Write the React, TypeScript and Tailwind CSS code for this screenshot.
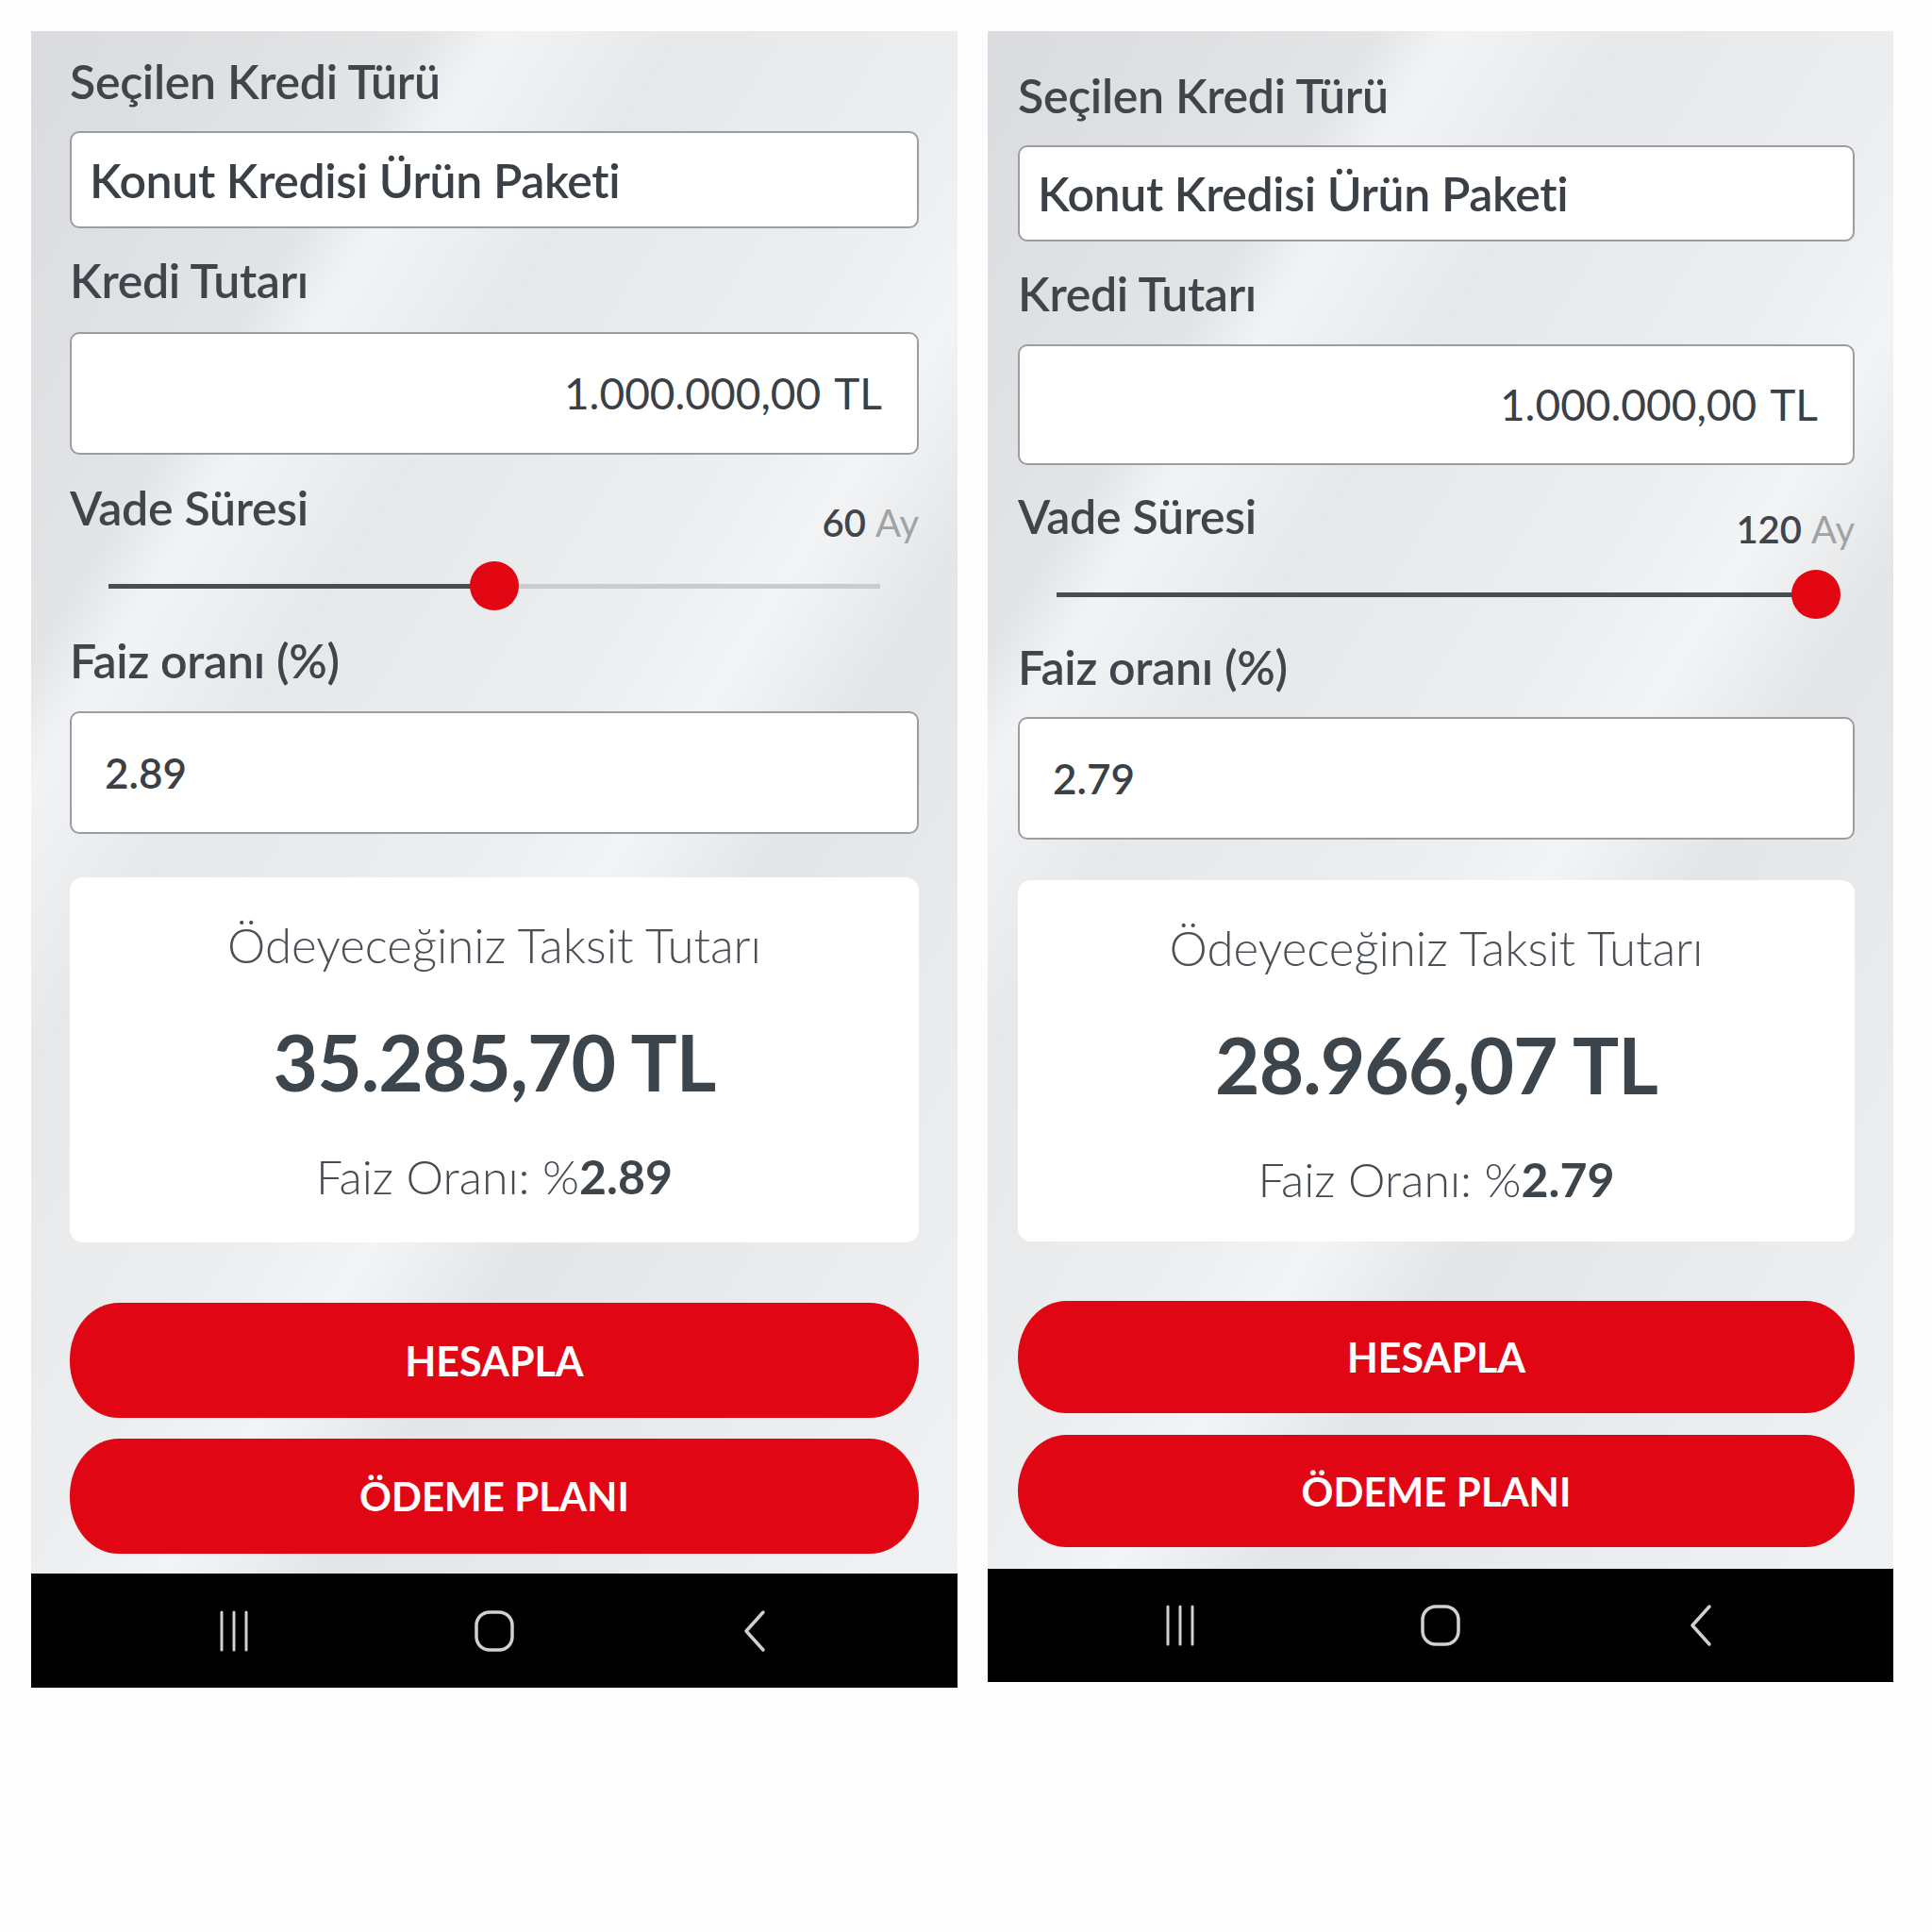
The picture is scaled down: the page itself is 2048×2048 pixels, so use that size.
import React from "react";

type Layout = {
  panel: string;
  content: string;
  input1: string;
  label2: string;
  input2: string;
  row3: string;
  months: string;
  slider: string;
  label4: string;
  input3: string;
  card: string;
  btn1: string;
  btn2: string;
  nav: string;
};

type Calc = {
  months: number;
  rate: string;
  payment: string;
  layout: Layout;
};

const FONT = "font-['Lato','Noto_Sans',sans-serif]";

const leftLayout: Layout = {
  panel: "w-[982px]",
  content: "pl-[41px] pr-[41px] pt-[28px]",
  input1: "mt-[28px] h-[103px]",
  label2: "mt-[30px]",
  input2: "mt-[30px] h-[130px]",
  row3: "mt-[31px]",
  months: "mt-[21px]",
  slider: "mt-[21px]",
  label4: "mt-[28px]",
  input3: "mt-[29px] h-[130px]",
  card: "mt-[46px] h-[387px]",
  btn1: "mt-[64px] h-[122px]",
  btn2: "mt-[22px] h-[122px]",
  nav: "mt-[21px] h-[121px]",
};

const rightLayout: Layout = {
  panel: "w-[960px]",
  content: "pl-[32px] pr-[41px] pt-[43px]",
  input1: "mt-[28px] h-[102px]",
  label2: "mt-[30px]",
  input2: "mt-[29px] h-[128px]",
  row3: "mt-[29px]",
  months: "mt-[19px]",
  slider: "mt-[23px]",
  label4: "mt-[26px]",
  input3: "mt-[28px] h-[130px]",
  card: "mt-[43px] h-[383px]",
  btn1: "mt-[63px] h-[119px]",
  btn2: "mt-[23px] h-[119px]",
  nav: "mt-[23px] h-[120px]",
};

const calcs: Calc[] = [
  { months: 60, rate: "2.89", payment: "35.285,70 TL", layout: leftLayout },
  { months: 120, rate: "2.79", payment: "28.966,07 TL", layout: rightLayout },
];

function Label({ children, className = "" }: { children: React.ReactNode; className?: string }) {
  return (
    <div className={`text-[50px] leading-none font-semibold tracking-[-0.3px] text-[#3f454b] ${className}`}>
      {children}
    </div>
  );
}

function Slider({ months, className }: { months: number; className: string }) {
  const pct = (months / 120) * 100;
  return (
    <div className={`relative mx-[41px] h-[52px] ${className}`}>
      <div className="absolute inset-x-0 top-[24px] flex h-[5px]">
        <div className="h-full bg-[#474d53]" style={{ width: `${pct}%` }} />
        <div className="h-full flex-1 bg-[#c9cbcd]" />
      </div>
      <div
        className="absolute top-0 h-[52px] w-[52px] -translate-x-1/2 rounded-full bg-[#e20613]"
        style={{ left: `${pct}%` }}
      />
    </div>
  );
}

function NavBar({ className }: { className: string }) {
  return (
    <div className={`flex items-center justify-center gap-[216px] bg-black ${className}`}>
      <div className="flex w-[60px] justify-center">
        <svg width="34" height="46" viewBox="0 0 34 46" fill="none" stroke="#cfd0d1" strokeWidth="3" strokeLinecap="round">
          <path d="M4 3v40M17 3v40M30 3v40" />
        </svg>
      </div>
      <div className="flex w-[60px] justify-center">
        <svg width="44" height="46" viewBox="0 0 44 46" fill="none" stroke="#cfd0d1" strokeWidth="3.5">
          <rect x="3" y="3" width="38" height="40" rx="14" />
        </svg>
      </div>
      <div className="flex w-[60px] justify-center">
        <svg width="28" height="46" viewBox="0 0 28 46" fill="none" stroke="#cfd0d1" strokeWidth="3.5" strokeLinecap="round" strokeLinejoin="round">
          <path d="M23 3L5 23l18 20" />
        </svg>
      </div>
    </div>
  );
}

function CalcPanel({ calc }: { calc: Calc }) {
  const l = calc.layout;
  return (
    <div
      className={`flex flex-col bg-[linear-gradient(122deg,#d9dbde_0%,#e2e4e6_20%,#f2f3f4_24%,#e6e8ea_33%,#eceeef_50%,#f3f4f5_56%,#e3e5e7_64%,#e9ebec_78%,#f2f3f4_100%)] ${l.panel}`}
    >
      <div className={`flex flex-col ${l.content}`}>
        <Label>Seçilen Kredi Türü</Label>
        <div
          className={`flex items-center rounded-[10px] border-2 border-[#9a9da1] bg-white pl-[19px] text-[50px] leading-none font-semibold tracking-[-0.4px] text-[#3a4046] ${l.input1}`}
        >
          Konut Kredisi Ürün Paketi
        </div>

        <Label className={l.label2}>Kredi Tutarı</Label>
        <div
          className={`flex items-center justify-end rounded-[10px] border-2 border-[#9a9da1] bg-white pr-[37px] text-[46px] leading-none text-[#3a4046] ${l.input2}`}
        >
          <span>1.000.000,00</span>
          <span className="ml-[14px]">TL</span>
        </div>

        <div className={`flex items-start justify-between ${l.row3}`}>
          <Label>Vade Süresi</Label>
          <div className={`text-[40px] leading-none ${l.months}`}>
            <span className="font-semibold text-[#3f454b]">{calc.months}</span>
            <span className="ml-[10px] text-[#a0a3a6]">Ay</span>
          </div>
        </div>

        <Slider months={calc.months} className={l.slider} />

        <Label className={l.label4}>Faiz oranı (%)</Label>
        <div
          className={`flex items-center rounded-[10px] border-2 border-[#9a9da1] bg-white pl-[35px] text-[44px] leading-none font-semibold text-[#3a4046] ${l.input3}`}
        >
          {calc.rate}
        </div>

        <div className={`flex flex-col items-center rounded-[14px] bg-white ${l.card}`}>
          <div className="mt-[46px] text-[51px] leading-none font-light text-[#4a5056]">
            Ödeyeceğiniz Taksit Tutarı
          </div>
          <div className="mt-[57px] text-[82px] leading-none font-bold tracking-[-1px] text-[#3d454c]">
            {calc.payment}
          </div>
          <div className="mt-[56px] text-[50px] leading-none font-light text-[#454b51]">
            Faiz Oranı: %<span className="font-bold text-[#3d454c]">{calc.rate}</span>
          </div>
        </div>

        <button
          type="button"
          className={`flex items-center justify-center rounded-[52px/60px] bg-[#e10613] text-[43px] leading-none font-bold text-white ${l.btn1}`}
        >
          HESAPLA
        </button>
        <button
          type="button"
          className={`flex items-center justify-center rounded-[52px/60px] bg-[#e10613] text-[42px] leading-none font-bold text-white ${l.btn2}`}
        >
          ÖDEME PLANI
        </button>
      </div>
      <NavBar className={l.nav} />
    </div>
  );
}

export default function App() {
  return (
    <main className={`flex min-h-[2048px] w-[2048px] items-start gap-[32px] bg-[#fdfdfd] pl-[33px] pt-[33px] ${FONT}`}>
      {calcs.map((c) => (
        <CalcPanel key={c.months} calc={c} />
      ))}
    </main>
  );
}
